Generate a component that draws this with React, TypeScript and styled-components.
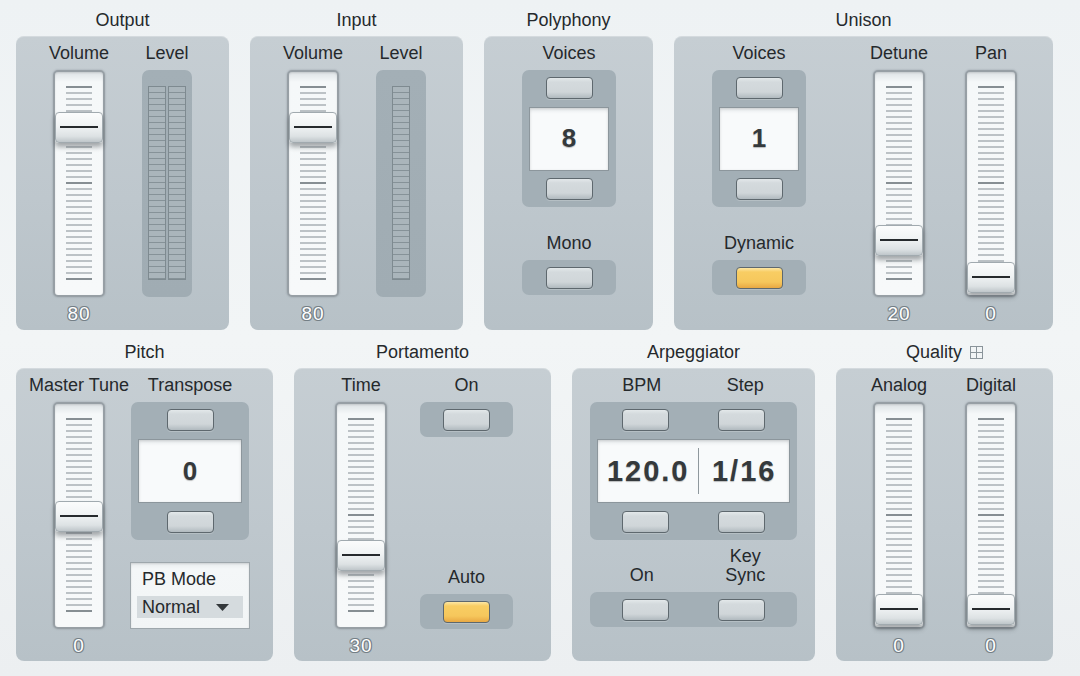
import React, { FC } from 'react';
import styled, { createGlobalStyle } from 'styled-components';

const GlobalStyle = createGlobalStyle`
    html, body {
        margin: 0;
        padding: 0;
    }
    body {
        width: 1080px;
        height: 676px;
        overflow: hidden;
        background: linear-gradient(180deg, #eef2f4 0%, #f2f5f6 50%, #eceff1 100%);
        font-family: 'Liberation Sans', Arial, sans-serif;
        color: #2b3033;
    }
`;

const TICKS = 33;

interface ISlider {
    label: string;
    value: string;
    thumbTop: number;
    ml?: number;
}

const Slider: FC<ISlider> = ({ label, value, thumbTop, ml }) => (
    <Col $w={52} $ml={ml}>
        <Label>{label}</Label>
        <Track>
            {Array.from({ length: TICKS }).map((_, i) => (
                <Tick key={i} $major={i % 16 === 0} />
            ))}
            <Thumb style={{ top: thumbTop - 2 }}>
                <ThumbLine />
            </Thumb>
        </Track>
        <Value>{value}</Value>
    </Col>
);

const Meter: FC<{ bars: number; ml?: number }> = ({ bars, ml }) => (
    <Col $w={50} $ml={ml}>
        <Label>Level</Label>
        <MeterWell>
            {Array.from({ length: bars }).map((_, i) => (
                <MeterBar key={i} />
            ))}
        </MeterWell>
    </Col>
);

const Stepper: FC<{ w: number; h?: number; children: React.ReactNode; cols?: number }> = ({
    w,
    h = 137,
    children,
    cols = 1,
}) => (
    <StepWell $w={w} $h={h}>
        <BtnRow $cols={cols}>
            {Array.from({ length: cols }).map((_, i) => (
                <Btn key={i} />
            ))}
        </BtnRow>
        <Display $w={w - 14}>{children}</Display>
        <BtnRow $cols={cols}>
            {Array.from({ length: cols }).map((_, i) => (
                <Btn key={i} />
            ))}
        </BtnRow>
    </StepWell>
);

const QualityIcon = () => (
    <svg width="13" height="13" viewBox="0 0 13 13" style={{ marginLeft: 8 }}>
        <rect x="0.5" y="0.5" width="12" height="12" fill="none" stroke="#8a949a" />
        <line x1="6.5" y1="1" x2="6.5" y2="12" stroke="#8a949a" />
        <line x1="1" y1="6.5" x2="12" y2="6.5" stroke="#8a949a" />
    </svg>
);

const App: FC = () => (
    <Page>
        <GlobalStyle />
        <Row>
            <Section $w={213}>
                <Title>Output</Title>
                <Panel $h={294} $pl={37}>
                    <Slider label="Volume" value="80" thumbTop={42} />
                    <Meter bars={2} ml={37} />
                </Panel>
            </Section>
            <Section $w={213}>
                <Title>Input</Title>
                <Panel $h={294} $pl={37}>
                    <Slider label="Volume" value="80" thumbTop={42} />
                    <Meter bars={1} ml={37} />
                </Panel>
            </Section>
            <Section $w={169}>
                <Title>Polyphony</Title>
                <Panel $h={294} $pl={38}>
                    <Col $w={94}>
                        <Label>Voices</Label>
                        <Stepper w={94}>
                            <Digits>8</Digits>
                        </Stepper>
                        <Label $mt={19}>Mono</Label>
                        <BtnWell $w={94}>
                            <Btn />
                        </BtnWell>
                    </Col>
                </Panel>
            </Section>
            <Section $w={379}>
                <Title>Unison</Title>
                <Panel $h={294} $pl={38}>
                    <Col $w={94}>
                        <Label>Voices</Label>
                        <Stepper w={94}>
                            <Digits>1</Digits>
                        </Stepper>
                        <Label $mt={19}>Dynamic</Label>
                        <BtnWell $w={94}>
                            <Btn $on />
                        </BtnWell>
                    </Col>
                    <Slider label="Detune" value="20" thumbTop={155} ml={67} />
                    <Slider label="Pan" value="0" thumbTop={192} ml={40} />
                </Panel>
            </Section>
        </Row>
        <Row>
            <Section $w={257}>
                <Title>Pitch</Title>
                <Panel $h={293} $pl={37}>
                    <Slider label="Master Tune" value="0" thumbTop={99} />
                    <Col $w={118} $ml={26}>
                        <Label>Transpose</Label>
                        <Stepper w={118} h={138}>
                            <Digits>0</Digits>
                        </Stepper>
                        <PbBox>
                            <PbTitle>PB Mode</PbTitle>
                            <PbSelect>
                                <span>Normal</span>
                                <svg width="13" height="7" viewBox="0 0 13 7">
                                    <polygon points="0,0 13,0 6.5,7" fill="#33383b" />
                                </svg>
                            </PbSelect>
                        </PbBox>
                    </Col>
                </Panel>
            </Section>
            <Section $w={257}>
                <Title>Portamento</Title>
                <Panel $h={293} $pl={41}>
                    <Slider label="Time" value="30" thumbTop={138} />
                    <Col $w={93} $ml={33}>
                        <Label>On</Label>
                        <BtnWell $w={93}>
                            <Btn />
                        </BtnWell>
                        <Label $mt={123}>Auto</Label>
                        <BtnWell $w={93}>
                            <Btn $on />
                        </BtnWell>
                    </Col>
                </Panel>
            </Section>
            <Section $w={243}>
                <Title>Arpeggiator</Title>
                <Panel $h={293} $pl={18}>
                    <Col $w={207}>
                        <LabelGrid>
                            <Label>BPM</Label>
                            <Label>Step</Label>
                        </LabelGrid>
                        <Stepper w={207} h={138} cols={2}>
                            <ArpHalf $flex={102}>120.0</ArpHalf>
                            <ArpHalf $flex={91} $divider>
                                1/16
                            </ArpHalf>
                        </Stepper>
                        <BottomLabels>
                            <span>On</span>
                            <span>
                                Key
                                <br />
                                Sync
                            </span>
                        </BottomLabels>
                        <BtnWell $w={207} $cols={2}>
                            <Btn />
                            <Btn />
                        </BtnWell>
                    </Col>
                </Panel>
            </Section>
            <Section $w={217}>
                <Title>
                    Quality
                    <QualityIcon />
                </Title>
                <Panel $h={293} $pl={37}>
                    <Slider label="Analog" value="0" thumbTop={192} />
                    <Slider label="Digital" value="0" thumbTop={192} ml={40} />
                </Panel>
            </Section>
        </Row>
    </Page>
);

const Page = styled.div`
    padding: 4px 0 0 16px;
    display: flex;
    flex-direction: column;
    gap: 6px;
`;

const Row = styled.div`
    display: flex;
    gap: 21px;
`;

const Section = styled.section<{ $w: number }>`
    width: ${(p) => p.$w}px;
    display: flex;
    flex-direction: column;
`;

const Title = styled.div`
    height: 32px;
    display: flex;
    align-items: center;
    justify-content: center;
    font-size: 18px;
    color: #25292c;
`;

const Panel = styled.div<{ $h: number; $pl: number }>`
    height: ${(p) => p.$h}px;
    box-sizing: border-box;
    padding-left: ${(p) => p.$pl}px;
    border-radius: 8px;
    background: linear-gradient(180deg, #c6ced3 0%, #bec7cd 55%, #b7c1c7 100%);
    box-shadow: inset 0 1px 0 rgba(255, 255, 255, 0.25);
    display: flex;
    align-items: flex-start;
`;

const Col = styled.div<{ $w: number; $ml?: number }>`
    width: ${(p) => p.$w}px;
    margin-left: ${(p) => p.$ml || 0}px;
    flex-shrink: 0;
    display: flex;
    flex-direction: column;
    align-items: center;
`;

const Label = styled.div<{ $mt?: number }>`
    width: 100%;
    height: 34px;
    margin-top: ${(p) => p.$mt || 0}px;
    display: flex;
    align-items: center;
    justify-content: center;
    white-space: nowrap;
    font-size: 18px;
    color: #25292c;
`;

const LabelGrid = styled.div`
    width: 100%;
    display: grid;
    grid-template-columns: 1fr 1fr;
`;

const BottomLabels = styled.div`
    width: 100%;
    height: 46px;
    margin-top: 6px;
    box-sizing: border-box;
    padding-bottom: 7px;
    display: grid;
    grid-template-columns: 1fr 1fr;
    align-items: end;
    text-align: center;
    font-size: 18px;
    line-height: 19px;
    color: #25292c;
`;

const Track = styled.div`
    position: relative;
    width: 52px;
    height: 227px;
    box-sizing: border-box;
    padding-top: 14px;
    border: 2px solid #979fa5;
    border-radius: 5px;
    background: linear-gradient(180deg, #dde2e5 0px, #f5f8f9 10px, #f7f9fa 100%);
    box-shadow: 0 0 2px rgba(60, 70, 76, 0.35), inset 0 1px 2px rgba(0, 0, 0, 0.12);
    display: flex;
    flex-direction: column;
    align-items: center;
    gap: 4px;
`;

const Tick = styled.div<{ $major: boolean }>`
    width: 26px;
    height: 2px;
    flex-shrink: 0;
    background: ${(p) => (p.$major ? '#868e93' : '#bcc2c6')};
`;

const Thumb = styled.div`
    position: absolute;
    left: 0;
    width: 48px;
    height: 31px;
    box-sizing: border-box;
    border: 1px solid #a1aaaf;
    border-radius: 4px;
    background: linear-gradient(180deg, #fbfcfc 0%, #f0f3f4 45%, #dde2e4 80%, #bfc6ca 100%);
    box-shadow: 0 4px 5px rgba(40, 48, 53, 0.4);
    display: flex;
    justify-content: center;
    padding-top: 13px;
`;

const ThumbLine = styled.div`
    width: 38px;
    height: 2px;
    background: #262a2d;
`;

const Value = styled.div`
    height: 33px;
    display: flex;
    align-items: center;
    justify-content: center;
    font-size: 19px;
    letter-spacing: 1px;
    color: #ffffff;
    text-shadow: -1px 0 #737e85, 1px 0 #737e85, 0 -1px #737e85, 0 1px #737e85, -1px -1px #8a949a,
        1px 1px #8a949a, 1px -1px #8a949a, -1px 1px #8a949a;
`;

const MeterWell = styled.div`
    width: 50px;
    height: 227px;
    box-sizing: border-box;
    padding-top: 16px;
    border-radius: 7px;
    background: linear-gradient(180deg, #a3afb6, #a0acb3);
    display: flex;
    justify-content: center;
    gap: 2px;
`;

const MeterBar = styled.div`
    width: 18px;
    height: 194px;
    box-sizing: border-box;
    border: 1px solid #7e8a90;
    background: repeating-linear-gradient(180deg, #aab5bb 0px, #aab5bb 5px, #869298 5px, #869298 6px);
`;

const StepWell = styled.div<{ $w: number; $h: number }>`
    width: ${(p) => p.$w}px;
    height: ${(p) => p.$h}px;
    box-sizing: border-box;
    padding: 7px;
    border-radius: 7px;
    background: #a3afb6;
    display: flex;
    flex-direction: column;
    justify-content: space-between;
    align-items: center;
`;

const BtnRow = styled.div<{ $cols: number }>`
    width: 100%;
    display: grid;
    grid-template-columns: repeat(${(p) => p.$cols}, 1fr);
    justify-items: center;
`;

const BtnWell = styled.div<{ $w: number; $cols?: number }>`
    width: ${(p) => p.$w}px;
    height: 35px;
    box-sizing: border-box;
    padding: 0 7px;
    border-radius: 7px;
    background: #a3afb6;
    display: grid;
    grid-template-columns: repeat(${(p) => p.$cols || 1}, 1fr);
    justify-items: center;
    align-items: center;
`;

const Btn = styled.div<{ $on?: boolean }>`
    width: 47px;
    height: 22px;
    box-sizing: border-box;
    border: 1px solid #5e686e;
    border-radius: 4px;
    background: ${(p) =>
        p.$on
            ? 'linear-gradient(180deg, #fde7a4 0%, #f8cd63 20%, #f6c75c 70%, #e8a843 100%)'
            : 'linear-gradient(180deg, #e3e8ea 0%, #d4dadd 20%, #d0d6d9 70%, #b1babf 100%)'};
    box-shadow: 0 1px 0 rgba(255, 255, 255, 0.2);
`;

const Display = styled.div<{ $w: number }>`
    width: ${(p) => p.$w}px;
    height: 64px;
    box-sizing: border-box;
    border: 1px solid #8c969c;
    background: linear-gradient(180deg, #e9edef 0px, #f8fafb 6px, #f8fafb 100%);
    box-shadow: inset 0 1px 3px rgba(0, 0, 0, 0.15);
    display: flex;
    align-items: center;
    justify-content: center;
`;

const Digits = styled.span`
    font-size: 26px;
    font-weight: bold;
    color: #35393c;
    text-shadow: 0 1px 1px rgba(0, 0, 0, 0.25);
`;

const ArpHalf = styled.div<{ $divider?: boolean; $flex: number }>`
    flex: ${(p) => p.$flex};
    height: 46px;
    display: flex;
    align-items: center;
    justify-content: center;
    border-left: ${(p) => (p.$divider ? '1px solid #8f989d' : 'none')};
    font-size: 29px;
    font-weight: bold;
    letter-spacing: 2px;
    color: #35393c;
    text-shadow: 0 1px 1px rgba(0, 0, 0, 0.25);
`;

const PbBox = styled.div`
    width: 120px;
    height: 67px;
    margin-top: 22px;
    box-sizing: border-box;
    padding: 0 6px;
    border: 1px solid #9ea7ac;
    background: linear-gradient(180deg, #e8ecee 0px, #f4f7f8 6px, #f2f5f6 100%);
    box-shadow: inset 0 1px 2px rgba(0, 0, 0, 0.12);
    display: flex;
    flex-direction: column;
`;

const PbTitle = styled.div`
    height: 33px;
    padding-left: 5px;
    display: flex;
    align-items: center;
    font-size: 18px;
    color: #25292c;
`;

const PbSelect = styled.div`
    height: 22px;
    padding: 0 14px 0 5px;
    background: #d5dbde;
    display: flex;
    align-items: center;
    justify-content: space-between;
    font-size: 18px;
    color: #25292c;
`;

export default App;
